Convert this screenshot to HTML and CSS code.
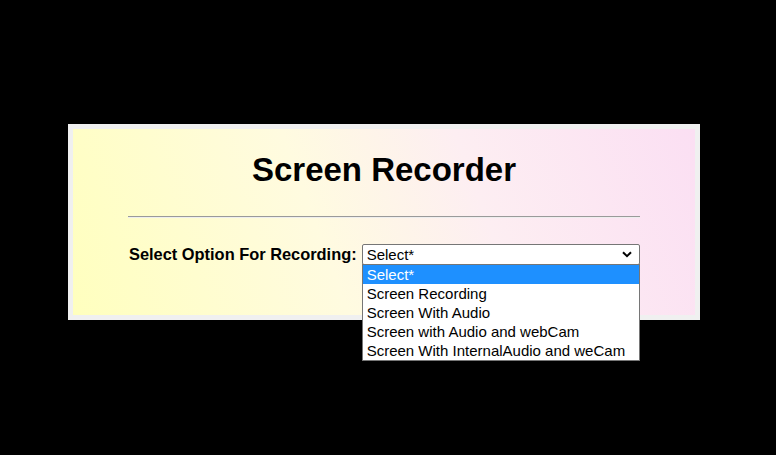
FILE: index.html
```html
<!DOCTYPE html>
<html lang="en">
<head>
<meta charset="utf-8">
<title>Screen Recorder</title>
<link rel="stylesheet" href="styles.css">
</head>
<body>
<main class="page">
  <section class="card">
    <h1 class="title">Screen Recorder</h1>
    <hr class="divider">
    <div class="row">
      <label class="label">Select Option For Recording:</label>
      <div class="select-wrap">
        <div class="select">
          <span class="select-value">Select*</span>
          <svg class="chevron" width="10" height="7" viewBox="0 0 10 7"><path d="M1 1.2 L5 5.2 L9 1.2" fill="none" stroke="#000" stroke-width="2"/></svg>
        </div>
        <ul class="options">
          <li class="option active">Select*</li>
          <li class="option">Screen Recording</li>
          <li class="option">Screen With Audio</li>
          <li class="option">Screen with Audio and webCam</li>
          <li class="option">Screen With InternalAudio and weCam</li>
        </ul>
      </div>
    </div>
  </section>
</main>
</body>
</html>
```
FILE: styles.css
```css
html, body {
  margin: 0;
  padding: 0;
  background: #000;
  font-family: "Liberation Sans", Arial, sans-serif;
}
.page {
  padding: 124px 0 0 68px;
  height: 455px;
  box-sizing: border-box;
}
.card {
  width: 632px;
  height: 196px;
  box-sizing: border-box;
  border: 5px solid #f0f0f0;
  background: linear-gradient(70deg, #ffffbe 0%, #fffbe0 40%, #fdeef2 65%, #fbdff3 100%);
  padding: 0 55px;
  display: flex;
  flex-direction: column;
}
.title {
  margin: 22px 0 0;
  font-size: 33px;
  line-height: 38px;
  font-weight: bold;
  text-align: center;
  color: #000;
}
.divider {
  margin: 27px 0 0;
  border: 0;
  border-top: 1px solid #9a9a9a;
  border-bottom: 1px solid #eeeeee;
  height: 0;
}
.row {
  margin-top: 26px;
  display: flex;
  align-items: center;
  gap: 5px;
  padding-left: 1px;
}
.label {
  font-size: 16.4px;
  font-weight: bold;
  color: #000;
}
.select-wrap {
  position: relative;
  flex: 1;
}
.select {
  height: 21px;
  box-sizing: border-box;
  border: 1px solid #767676;
  border-radius: 2px;
  background: #fff;
  display: flex;
  align-items: center;
  justify-content: space-between;
  padding: 0 7px 0 4px;
  font-size: 15px;
  color: #000;
}
.chevron {
  display: block;
}
.options {
  position: absolute;
  left: 0;
  right: 0;
  top: 20px;
  margin: 0;
  padding: 0;
  list-style: none;
  background: #fff;
  border: 1px solid #767676;
  z-index: 2;
}
.option {
  height: 19px;
  line-height: 19px;
  padding-left: 4px;
  font-size: 15px;
  color: #000;
  white-space: nowrap;
}
.option.active {
  background: #1e90ff;
  color: #fff;
}
```
